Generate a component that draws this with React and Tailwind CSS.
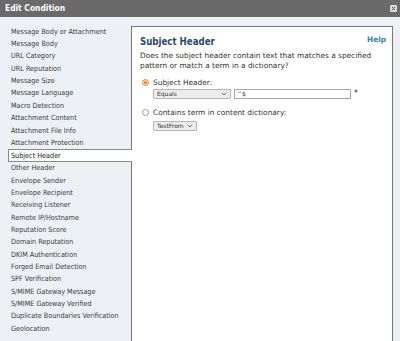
import React from "react";

const items = [
  "Message Body or Attachment",
  "Message Body",
  "URL Category",
  "URL Reputation",
  "Message Size",
  "Message Language",
  "Macro Detection",
  "Attachment Content",
  "Attachment File Info",
  "Attachment Protection",
  "Subject Header",
  "Other Header",
  "Envelope Sender",
  "Envelope Recipient",
  "Receiving Listener",
  "Remote IP/Hostname",
  "Reputation Score",
  "Domain Reputation",
  "DKIM Authentication",
  "Forged Email Detection",
  "SPF Verification",
  "S/MIME Gateway Message",
  "S/MIME Gateway Verified",
  "Duplicate Boundaries Verification",
  "Geolocation",
];

const condensed = { fontFamily: '"DejaVu Sans Condensed", "DejaVu Sans", sans-serif' };

const Chevron = () => (
  <svg width="6" height="4" viewBox="0 0 6 4" className="ml-auto">
    <path d="M0.8 0.8 L3 3 L5.2 0.8" fill="none" stroke="#666" strokeWidth="0.9" />
  </svg>
);

export default function App() {
  return (
    <div
      className="w-[400px] h-[341px] overflow-hidden bg-[#edf1f5] text-[#333] text-[7.4px]"
      style={{ fontFamily: '"DejaVu Sans", Verdana, sans-serif' }}
    >
      {/* Title bar */}
      <div className="h-[17px] bg-[#6a6a6a] flex items-center pl-[5px] pr-[3px]">
        <span className="text-white font-bold text-[8.4px]" style={condensed}>
          Edit Condition
        </span>
        <div className="ml-auto w-[7px] h-[7px] rounded-[1px] bg-[#d8d8d8] flex items-center justify-center">
          <svg width="5" height="5" viewBox="0 0 5 5">
            <path d="M1 1 L4 4 M4 1 L1 4" stroke="#555" strokeWidth="1" />
          </svg>
        </div>
      </div>

      <div className="flex pt-[9px]">
        {/* Condition list */}
        <ul className="w-[131px] pl-[8px] shrink-0 text-[7.2px] whitespace-nowrap" style={condensed}>
          {items.map((it) =>
            it === "Subject Header" ? (
              <li
                key={it}
                className="relative z-10 -mr-px h-[13px] flex items-center pl-[2px] bg-white border border-r-0 border-[#8a8a8a] text-[#222]"
              >
                {it}
              </li>
            ) : (
              <li key={it} className="h-[12.35px] flex items-center pl-[3px] text-[#3a3a3a]">
                {it}
              </li>
            )
          )}
        </ul>

        {/* Detail panel */}
        <div className="w-[262px] h-[330px] bg-white border border-b-0 border-[#777] px-[8px] pt-[7px]">
          <div className="flex items-start">
            <h2 className="text-[9.6px] font-bold text-[#2d4a68] leading-none mt-[3px]" style={condensed}>
              Subject Header
            </h2>
            <a href="#" className="ml-auto text-[#3a7ca5] font-bold text-[7.4px] mr-[-2px]">
              Help
            </a>
          </div>
          <p className="mt-[4px] leading-[10px] text-[#333]">
            Does the subject header contain text that matches a specified pattern or match a term in a dictionary?
          </p>

          <div className="mt-[6px] flex items-center gap-[4px] pl-[2px]">
            <span className="w-[7px] h-[7px] rounded-full border border-[#e08a3c] bg-[#fbe3cc] flex items-center justify-center">
              <span className="w-[3px] h-[3px] rounded-full bg-[#e07a20]" />
            </span>
            <span>Subject Header:</span>
          </div>
          <div className="mt-[1px] ml-[13px] flex items-center">
            <div className="w-[78px] h-[10px] border border-[#b5b5b5] rounded-[1px] bg-[#ececec] flex items-center px-[3px] text-[6px]">
              Equals
              <Chevron />
            </div>
            <div className="ml-[3px] w-[117px] h-[10px] border border-[#a8a8a8] bg-white flex items-center px-[2px] text-[6px]">
              ^$
            </div>
            <span className="ml-[3px] text-[8px] leading-none">*</span>
          </div>

          <div className="mt-[8px] flex items-center gap-[4px] pl-[2px]">
            <span className="w-[7px] h-[7px] rounded-full border border-[#9a9a9a] bg-white" />
            <span>Contains term in content dictionary:</span>
          </div>
          <div className="mt-[3px] ml-[13px] flex">
            <div className="w-[44px] h-[10px] border border-[#b5b5b5] rounded-[1px] bg-[#ececec] flex items-center px-[3px] text-[6px]">
              TestFrom
              <Chevron />
            </div>
          </div>
        </div>
      </div>
    </div>
  );
}
